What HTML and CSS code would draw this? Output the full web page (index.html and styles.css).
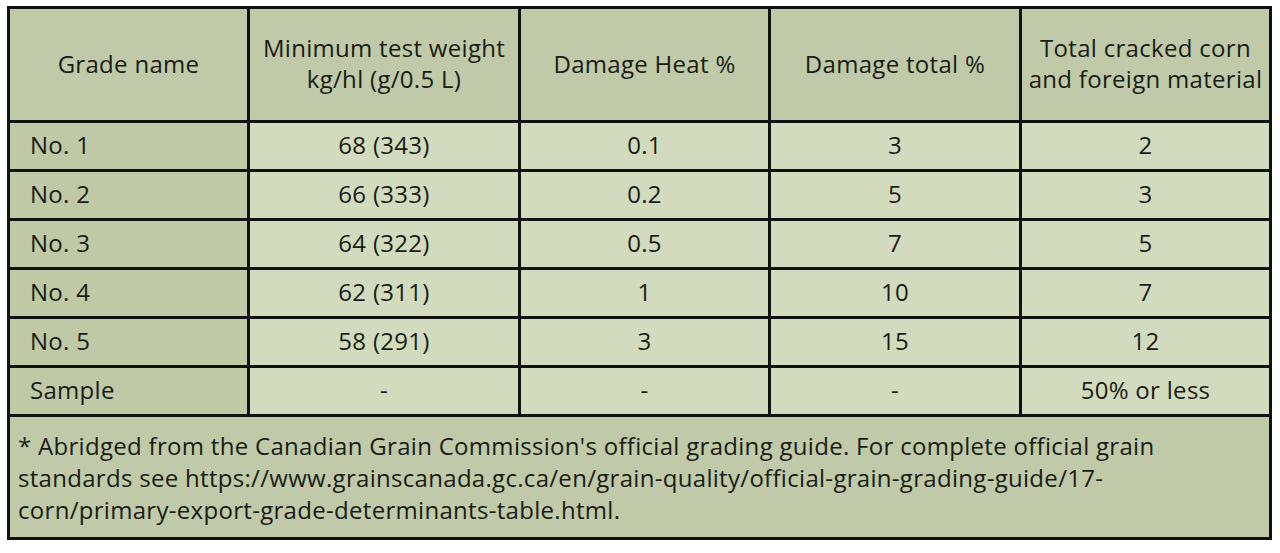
FILE: index.html
```html
<!DOCTYPE html>
<html lang="en">
<head>
<meta charset="utf-8">
<title>Corn grade determinants</title>
<link rel="stylesheet" href="styles.css">
</head>
<body>
<table class="grades">
  <colgroup>
    <col class="c1"><col class="c2"><col class="c3"><col class="c4"><col class="c5">
  </colgroup>
  <thead>
    <tr class="head">
      <th>Grade name</th>
      <th>Minimum test weight<br>kg/hl (g/0.5 L)</th>
      <th>Damage Heat %</th>
      <th>Damage total %</th>
      <th>Total cracked corn<br>and foreign material</th>
    </tr>
  </thead>
  <tbody>
    <tr><th class="name">No. 1</th><td>68 (343)</td><td>0.1</td><td>3</td><td>2</td></tr>
    <tr><th class="name">No. 2</th><td>66 (333)</td><td>0.2</td><td>5</td><td>3</td></tr>
    <tr><th class="name">No. 3</th><td>64 (322)</td><td>0.5</td><td>7</td><td>5</td></tr>
    <tr><th class="name">No. 4</th><td>62 (311)</td><td>1</td><td>10</td><td>7</td></tr>
    <tr><th class="name">No. 5</th><td>58 (291)</td><td>3</td><td>15</td><td>12</td></tr>
    <tr><th class="name">Sample</th><td>-</td><td>-</td><td>-</td><td>50% or less</td></tr>
  </tbody>
  <tfoot>
    <tr><td class="note" colspan="5">* Abridged from the Canadian Grain Commission's official grading guide. For complete official grain standards see https://www.grainscanada.gc.ca/en/grain-quality/official-grain-grading-guide/17-corn/primary-export-grade-determinants-table.html.</td></tr>
  </tfoot>
</table>
</body>
</html>
```
FILE: styles.css
```css
html, body {
  margin: 0;
  padding: 0;
  background: #ffffff;
}
body {
  padding: 6px 0 0 7px;
  font-family: "Open Sans", "DejaVu Sans", sans-serif;
  color: #1a1c15;
}
.grades {
  border-collapse: collapse;
  table-layout: fixed;
  width: 1265px;
  border: 3px solid #111;
  font-size: 24px;
  letter-spacing: 0.3px;
}
.c1 { width: 240px; }
.c2 { width: 271px; }
.c3 { width: 250px; }
.c4 { width: 251px; }
.c5 { width: 250px; }
.grades th, .grades td {
  border: 3px solid #111;
  padding: 0;
  font-weight: normal;
  text-align: center;
  vertical-align: middle;
}
.grades .head th {
  background: #c0caa8;
  height: 108px;
  padding-bottom: 3px;
  line-height: 31px;
}
.grades tbody td {
  background: #d2dbbd;
  height: 43px;
  padding-bottom: 3px;
  line-height: 30px;
}
.grades tbody th.name {
  background: #bfc9a6;
  text-align: left;
  padding-left: 20px;
  height: 43px;
  padding-bottom: 3px;
  line-height: 30px;
}
.grades .note {
  background: #c0caa8;
  text-align: left;
  vertical-align: top;
  padding: 13px 8px 0 8px;
  line-height: 32px;
  height: 107px;
}
```
